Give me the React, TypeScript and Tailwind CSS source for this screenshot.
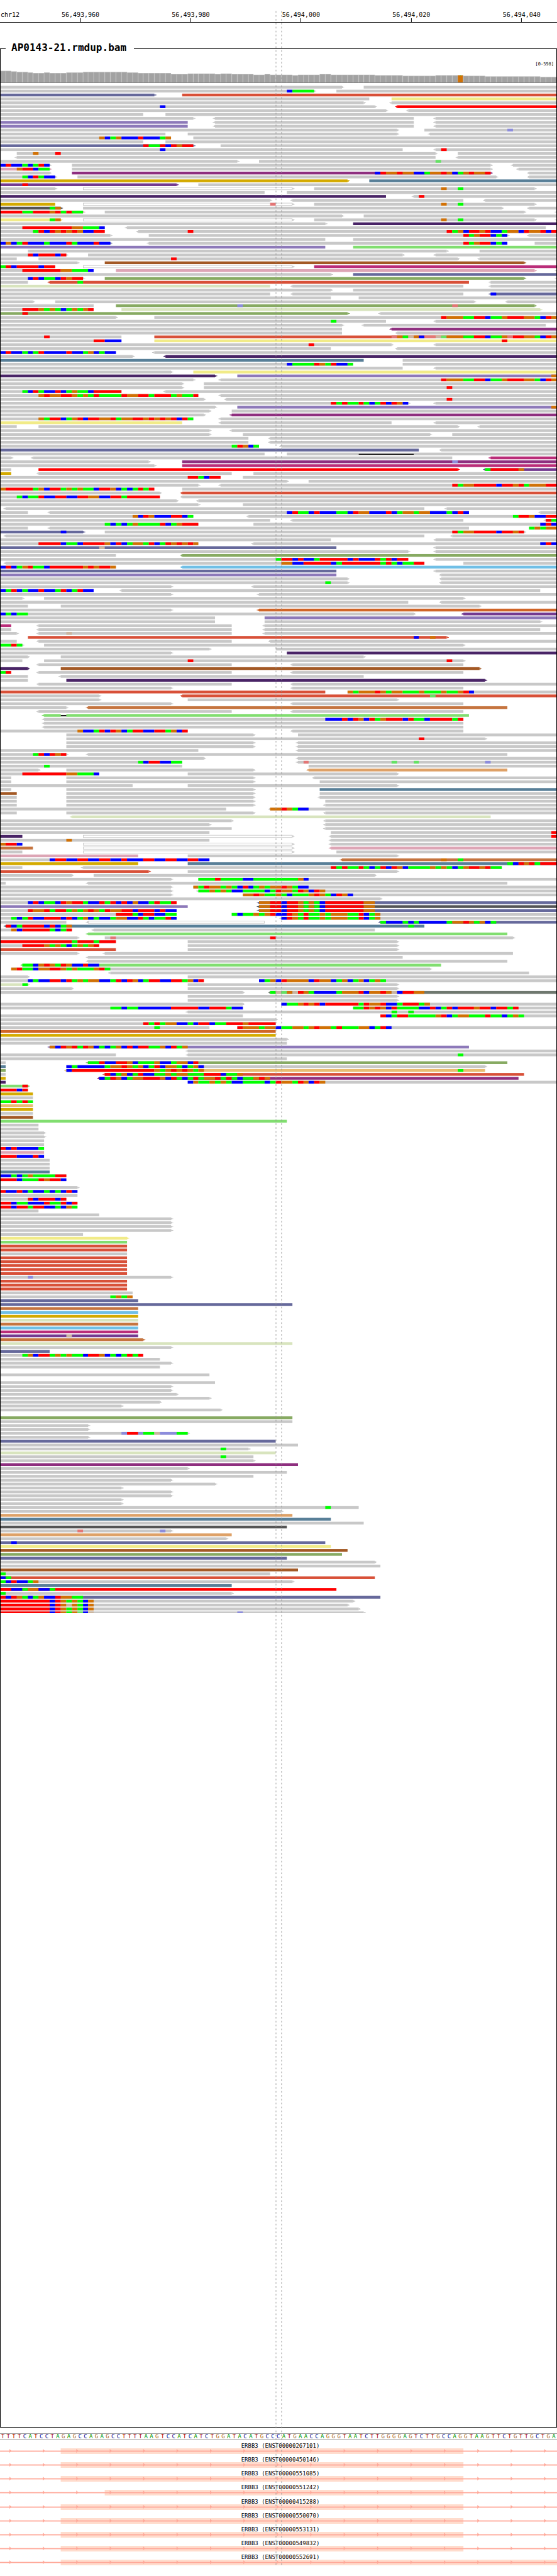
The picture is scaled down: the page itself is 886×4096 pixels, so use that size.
import React from "react";

/* ---------- Geometry shared by every track ---------- */

const BASE_WIDTH = 9.9;
const ROW_PITCH = 7;
const READ_HEIGHT = 5;
const FIRST_ROW_Y = 5;

const baseX = (index: number) => Math.round(index * BASE_WIDTH);

/* ---------- Colours ---------- */

const READ_COLORS: Record<string, string> = {
  grey: "#c8c8c8",
  sl: "#66699b",
  rd: "#d85038",
  ye: "#f1eb88",
  red: "#ff0000",
  pu: "#8d79b9",
  go: "#d4aa00",
  te: "#587f98",
  vi: "#733a90",
  dk: "#492466",
  ma: "#8e2f7f",
  pk: "#dda5b5",
  ch: "#555555",
  lg: "#81de70",
  br: "#a35925",
  mg: "#ba2d79",
  gr: "#87aa62",
  lm: "#d8e4be",
  sk: "#70bfe6",
  or: "#d06528",
  cu: "#c5743f",
  tn: "#dea167",
  sd: "#e8bc72",
  ol: "#6f786f",
};

const MISMATCH_COLORS: Record<string, string> = {
  A: "#00ff00",
  C: "#0000ff",
  G: "#d17105",
  T: "#ff0000",
  a: "#64e364",
  c: "#8c8cdc",
  g: "#cab5a0",
  t: "#e37676",
};

/* ---------- Alignment rows ----------
   One line per row. A read is written [<]start-end[>][=colour][@position bases],
   where < and > mark the strand arrow, lower-case bases have low quality,
   "-" is a deletion and the colour "h" draws an outlined read. */

const ALIGNMENTS = `
0-62> 66-101
0-57>@52CAAAA 61-101
0-28>=sl 33-101=rd
0-67 71-101=ye
0-66> <71-101
0-68>@29C <72-101=red
0-70> <74-101
0-26 30-101
0-35> <39-75 <79-101
0-34=pu <39-75 <79-101
0-34=pu <39-75 <79-101
0-72> 77-101@92c
0-30 34-72> <78-101
0-31@18GCAGCCCTCCCAG 35-101
0-26 30-101
0-35>=sl@26TAATCTGTT 40-101
0-73@29C <79-101@80T
3-79>@6G@10T 83-101
<3-79 <83-101
0-43> 47-101@79a
0-9>@0CTCCACATC 13-89> <93-101
0-9>=pk@3GTTCAA 13-89> <94-101
0-9> 13-89>=ma@68CTGGTGGCCAGGTGCAGTGGT <96-101
0-10>@4ACTACC 14-90> <96-101
0-63>=go 67-101=te
0-32>=vi@4T 36-101
0-10> 15-53>=h 57-97>@80G@83A
0-48 52-101
0-70=dk <75-101@76T
0-49> <53-84 <88-101
0-10=go 15-53>=h@49t 57-97>@80G@83A
0-11>=ch@9AG 15-91> <96-101
0-15>=pk@0TTTTAATTTGTATAA 19-95> <101-101
0-62> 66-101
0-11>=ye@9AG 15-53>=h 57-97>@80G@83A <101-101
0-59> 64-101=dk
0-19@4TTTTTTTTTGGAAAC <23-99
0-19@6ATCTGTGTGCCTT <25-101@34T@81TAGCTTGTCCAGGCTGGTCT
0-20> 27-92>@84TAGTTCAC <96-101
0-59 64-101
0-20>=sl@0CGCATCCCACCCTACCCTCC <27-92@84TAGTTCAC 97-101
0-59=pu 64-101=lg
5-81> 87-101
0-12>@5TCTTTCT 16-73> <79-101
0-3 7-83>@31T <87-101
0-14> 19-95>=br
0-10@0ATCTTTTCTT 15-53>=h 57-101=mg
0-17@4TTTTTTTGGAAAC 21-97>=pk <101-101
0-60> 64-101=sl
0-15>@5CTCAACTGTT 19-95>=gr <101-101
0-5 <9-85=rd@14A <89-101
0-49=lm <53-84 <89-101
0-60> 64-101
0-49 <53-84 <89-101=sl@89C
0-60 65-101
0-6> 10-86> <92-101
0-17 21-97>=gr@43c@82t
0-17@4TTTGAGACAGAGT 22-98>=lm
0-63>=gr@4T <69-101
0-21> 28-101@80TGGGAATTCAAGTTTGGACTG
0-70@60A <79-101
0-62> <66-99
0-62 <71-101=ma
0-62 <72-101
0-22@8T 28-101=rd@71tGAgGCttgaGGGAATTCAAGtTTGGACTG
0-22@17TTCCC 28-101=ye@91T
0-71>@56T <79-101
0-60 <72-101
0-21@0CTCCACATCCCCTCCAGCACC <28-101
0-24> <30-101=dk
0-66=te 73-101
0-64@52CAAAATGATCCA 73-101
0-73 <79-101
0-31> 35-101=ye
0-39>=dk 43-101=pu@100G
0-35> <40-101@80TGGGAATTCAAGTTTGGACTG
0-33> 37-101
0-33> 37-101@81T
0-22@4ACTACCTCAGAACTTTTT <30-101
0-36@7GTGGTTGAGATAAAATGGTTATTTAGAAT <40-101
0-37> <41-101@81T
0-74>@60TATAATACATCTGC <79-101
0-39> 43-101=pu@100G
0-38> 42-101
0-37> <42-101=ma
0-35@7GATTCAGTCTTGGTAGGTTGTGTGTCTA <40-101
0-33=ye <40-71 <79-101
0-3 7-83> <87-101
0-38> <42-101
0-38> 44-78> 82-101
0-45 <49-101
0-45 <49-101
0-47@42ATGCA <51-101
0-76=sl <80-101
0-48 52-101@65----------
0-2> <6-82 <89-101=mg
0-27> 33-101=ma@82c
0-28> 33-101=mg
0-2 7-83>=red <88-101=vi@88ATTTTTG
0-2=go <7-42 46-101
0-40@34TTACTT 44-101
0-52> 56-101
0-36> <40-101@82TAGGTTTTCTTGTAGGGTT
0-28@0GTTTTTAGCTTAGAGAACTTGCACATAT 33-101
0-29> <33-101=rd
0-29@3ACAATCCTTCCTTGGCCTTATTTTTT <33-101
0-32> <36-101
0-36> 44-101
<1-77 <81-101
0-5 <9-85@52CTAACTCCCAACTGGCCCTCAGGAGGCCCACTC <98-101
0-35@24GCTGCCCTTCA <45-101@93ATTGCCTT
0-49 <53-84 <99-101@99TA
0-36@19ACACAGAAAATCAGTTT 46-101@98CTC
0-5 <9-85 96-101@96AGAGG
0-15>=sl@11C 19-95>@82TAGGTTTTCTTGT
<1-77 <82-101
0-60 <79-101
0-36@7TTTTCAACTTTTGCTCAGGATCATGTGTG <46-101@98CTC
0-61=sl@18g <79-101
0-74> <79-101
0-21 <33-101=gr
0-74@50ATTCTCCATTTTTCTCCCTATCTT <79-101
<1-77@51GGCCTTTTTCATTTTTTTATACAATT 84-101
0-21@0CTCAGTAACTTTTTTGTGTTG <33-101=sk
0-61=sl <79-101
0-61=pu <80-101
0-63> <80-101
0-63>@59A <80-101
0-31> <46-101
0-17@0CATCACCTCCATCATCC <22-98
0-31> <47-101
0-4> 8-84>
0-74 <80-101
0-5 11-87>
0-31> <47-101=or
0-75>@0CACAA <84-101=vi
0-39 48-101=pu
0-39 48-98>
0-2=mg <7-42 <48-101
0-2 <7-42 <48-98
0-3> <7-42@12g <48-101
5-81>=rd@75C@78G
0-3 <7-42 <49-101
0-4>@0AATA 8-84>
0-38> 50-101
0-31> 52-101=dk
0-5> 11-66>
0-4 8-84>@34T@81T
<7-42 <53-84
0-5>=dk 11-87>=br
0-2@0AT <7-42 <53-84
0-5 <11-66
0-5 12-88>=dk
<7-42 <53-101
0-31> <53-84
0-59=rd 63-101@63GAGGGTGAGGAAAGAAAGAAGTC
0-18> <33-101=rd@78a
0-18> 34-72>
0-31> <53-84
0-12> <16-92=cu
<7-42 <53-84
<8-85=lg@11-
<8-84@59CCCTCTGCTAGTTTCTAACTTTTAT
<8-84
<8-84
0-34@14GCCATCTGCATTCCTTAGCT <53-84
12-46> 54-101
12-88>@76T
12-46> <54-101
12-46> <54-101
0-36 <54-101
0-12>@6ATCTGT <16-92
0-37> <54-101
0-33@25ACTTCCAA <54-101@55t@71a@75a@88c
0-33@8A 56-101
0-7> 12-46> <56-92=tn
0-18@4TTTTTTTTGGAAAC 34-72>
0-2 12-46> <57-101
0-2 12-46> 58-101
0-24 34-72>
0-2 12-46> 58-101=te
0-3=br 12-46> 58-101
0-3 12-46> <58-101
0-3 12-46> 59-101
0-3 12-46> <59-101
0-41 <49-101@49GGTGACC
0-3 12-46> <59-101
<13-89=lm
0-42> <59-101
0-38> <59-101
0-42 <59-101
0-38 60-101@100T
0-4=dk 15-53>=h <60-101@100T
0-38@12G <60-101
0-4@0GTTC 15-53>=h <60-101
0-6=cu 15-53>=h <60-101=pk
0-4 15-53>=h 61-101
0-25=pk 34-72>
0-38@9CTTCCTTCCTTCCTCCCTTCCTTCCTTCC <62-101=cu@80G@83A
0-25=go 34-101=te@92ACTGTATTT
0-4 <15-91@60TATAATACATCTGCAAAAGAGACAGTTGTAA
0-27>=rd 34-72>
0-13> 17-68>
0-31> 36-101@36AAATAAAACCAAAAAAAAGC
0-1 <16-92
0-31> 35-101@35GATGGAGACTCAGAGGTGACC
0-31> <36-101@36AAGAGACCAAAACATGGATGCTG
0-31> 44-101@44GGTGAAGACAAAGTGACTGC
0-69>
0-32@5CTCAACTGTTACCTATCTCGCCATAAT <47-101=sl@47GGTTCTTGAGACTTTTTTTGG
0-34=pu <47-101=ch@47GGTTCTTGAGACTTTTTTTGG
0-32@5TGGTATTAGAGTGATGGTTCTTTCTCC <47-101=sl@47GGTTCTTGAGACTTTTTTTGG
0-32@21TTTACTTCCAA 42-101@42ACAAGAGTCCTGATAAGAGGGAATCAG
0-32@2ACATCCTTTCTCAGCACCAGGCCTACAATC <51-101@51CTGATAAGAGGGAATCAG
0-12 <16-48=h <69-101=sl@69ACCCACACCCCCAGGTGAGCA
<1-77=te@1TCATTTTCTCAG@74A
0-13@2GCTTTTTACAT <17-68
<16-92=lg
0-14> 19-93>@20t@49T
0-21@0TTTTTTTTTTTTTATTTATTT 34-72>
0-18@4TTTTGAGACAGAGT 34-72>
0-21=rd 34-72>
0-14> <19-93
<16-73
<16-92
<4-80=lg@4AACGTGATGCCTCC
2-78>@2GTAACGGTTGAGAAAGTA
<20-96
0-5> 34-101
0-37@5CACCTTCTAGAGGCCATCTGCATTCCTTAGCT 47-101@47CAGCTGGGGCTGGCAGCAGCAGA
0-5>=lm@4A 34-72>
0-13> 34-72>
0-44> <49-101=ol@49AgaGgTGACCCCAGGGTCGGTGgCTTGG
34-72>
34-72>
0-44> 51-101@51CAAGTGTCTTTTTTATGGTCCATTTAG
0-44@20AACAACCCCCCTTTTTCCTTTACC 64-101@64AATGTGCTAAAACCTCATCTTTGTTCTTAT
<34-101@71A@74A
0-44 69-101@69TCATTAAAAAGTCAGGAAATAACAGA
0-50>
0-50@26TATAGGCCACTTCAATTTGTTTTT
0-38@28A 43-101@43TGGGAGGCAAGGAGTGGATAAAGGCATC
0-50=or
0-50=go
0-52>
0-52
<9-85=pu@9GCTGTATGCACAGCTCTTAAGCTAG
<34-101
0-21 <34-101@83A
0-52
0-1 <16-92=gr@16AATCCTTGCAAAGCCAGGCT
0-1=te 12-88>@12CACCCCCAGGTGAGCATCGGACAGC
0-1=gr <12-88=sd@12CTTTTTTTTTTTTTTTGAGTGTGAG@83A
0-1 <19-95=rd@19TCAGCATCCAAGAGGAAATTTCAAG
0-1=go <18-94=ma@18CATGCAGGTTTGCTACATAGGTATACAAGTG
0-1=dk 34-101@34CGAAGAGACCAAAACATGGATGCTG
0-5>=lg@4T
0-5@0TTTCT
0-6=go
0-6
0-6@0AATATA
0-6=sd
0-6=go
0-6
0-6=br
0-52=lg
0-7
0-7
0-8>
0-8>
0-8
0-8
0-8@0TCTCCCCA
0-8=pk
0-8@0TTTCCCTC
0-9
0-9
0-9
0-9=te
0-12@0CCACAGAAAATT
0-12@0TTTCAAATGTTC
.
0-14>
0-14@0TCCTCACCACACTC
0-14
0-12@5TCTTTCT
0-14@0TTCAACCCTAATCT
0-14@0TTCTTATTCCACGA
0-7
0-18
0-31>
0-31>
0-31>
0-31>
0-15
0-23>=ye
0-23=lg
0-23=rd
0-23=rd
0-23
0-23=rd
0-23=rd
0-23=rd
0-23=rd
0-23=rd
0-31>@5c
0-23=rd
0-23=rd
0-23=rd
0-24
0-24@20AGAG
0-25=sl
0-53=sl
0-25=cu
0-25=sk
0-25=go
0-25=lm
0-25=cu
0-25=sk
0-25=mg
0-25=vi@12g
0-26>=cu
0-53=lm
0-31>
0-9=sl
0-26@4AGCTTAGAGAACTTGCACATAT
0-29
0-31>
0-29
.
0-38
.
0-39
0-31>
0-31>
0-32>
0-38>
0-29>
0-22>
0-40>
.
0-53=gr
0-53
0-16>
0-16>
0-34>@22cTTcAAgcccAA
0-16>
0-50=sl
0-54
0-45>@40A
0-50=lm
0-46@40A
0-46>
0-54=ma
0-34>
0-52
0-46
0-31>
0-39>
0-22>
0-31>
0-31>
0-22>
0-22>
0-65@59A
0-51>
0-53=tn
0-60=te
0-66
0-52=ch
0-31>@14t@29c
0-42=tn
0-41>
0-59=sl@2C
0-60=ye
0-63=br
0-62=gr
0-52=sl
0-68>
0-69
0-54=br
0-49@0A
0-68=rd@0CA
0-53>@0ACTCCAG
0-42=te
0-61=red@0TTCCAGGCCA
0-42>@0A
0-69=sl@0TCTGACAGCCTGGAA
0-64>@0TTTTTTTTTCTGAGACG
0-63>@0TTTTTTTTTCTGgGACG
0-65>@0TTTTTTTTTCTGAGACG
0-66>@0TTTTTTTTTCTGAGaCg@43c
`
  .trim()
  .split("\n");

type Run = { start: number; length: number; base: string };

type Read = {
  start: number;
  end: number;
  left: boolean;
  right: boolean;
  color: string;
  runs: Run[];
};

const parseRuns = (text: string): Run[] => {
  const match = /^(\d+)(.+)$/.exec(text);
  if (!match) return [];
  const runs: Run[] = [];
  const first = Number(match[1]);
  match[2].split("").forEach((base, i) => {
    const last = runs[runs.length - 1];
    if (last && last.base === base) last.length += 1;
    else runs.push({ start: first + i, length: 1, base });
  });
  return runs;
};

const parseRead = (text: string): Read | null => {
  const [head, ...marks] = text.split("@");
  const match = /^(<?)(\d+)-(\d+)(>?)(?:=(\w+))?$/.exec(head);
  if (!match) return null;
  return {
    left: match[1] === "<",
    start: Number(match[2]),
    end: Number(match[3]),
    right: match[4] === ">",
    color: match[5] ?? "grey",
    runs: marks.flatMap(parseRuns),
  };
};

const ROWS: Read[][] = ALIGNMENTS.map((line) =>
  line
    .split(" ")
    .map(parseRead)
    .filter((read): read is Read => read !== null),
);

function ReadShape({ read, y }: { read: Read; y: number }) {
  const x1 = baseX(read.start);
  const x2 = baseX(read.end);
  const hollow = read.color === "h";
  const fill = hollow ? READ_COLORS.grey : READ_COLORS[read.color];
  return (
    <g>
      {hollow ? (
        <rect
          x={x1 + 0.5}
          y={y + 0.5}
          width={x2 - x1 - 1}
          height={READ_HEIGHT - 1}
          fill="#ffffff"
          stroke={fill}
        />
      ) : (
        <rect x={x1} y={y} width={x2 - x1} height={READ_HEIGHT} fill={fill} />
      )}
      {read.left && (
        <path d={`M${x1} ${y + 1}h-2v1h-2v1h2v1h2z`} fill={fill} />
      )}
      {read.right && (
        <path d={`M${x2} ${y + 1}h2v1h2v1h-2v1h-2z`} fill={fill} />
      )}
      {read.runs.map((run) => {
        const left = baseX(run.start);
        const width = baseX(run.start + run.length) - left;
        return run.base === "-" ? (
          <g key={run.start}>
            <rect x={left} y={y} width={width} height={READ_HEIGHT} fill="#ffffff" />
            <rect x={left} y={y + 2} width={width} height={2} fill="#000000" />
          </g>
        ) : (
          <rect
            key={run.start}
            x={left}
            y={y}
            width={width}
            height={READ_HEIGHT}
            fill={MISMATCH_COLORS[run.base]}
          />
        );
      })}
    </g>
  );
}

function AlignmentTrack() {
  return (
    <svg
      role="img"
      aria-label="Aligned reads"
      viewBox="1 0 998 2745"
      preserveAspectRatio="none"
      className="block h-[2433px] w-full"
    >
      {ROWS.map((reads, row) => (
        <g key={row}>
          {reads.map((read) => (
            <ReadShape key={read.start} read={read} y={FIRST_ROW_Y + row * ROW_PITCH} />
          ))}
        </g>
      ))}
    </svg>
  );
}

/* ---------- Coverage ---------- */

/* [number of bases, bar height] */
const COVERAGE_RUNS: [number, number][] = [
  [2, 21], [1, 20], [2, 19], [1, 18], [2, 17], [1, 18], [3, 17], [3, 18],
  [8, 19], [2, 18], [6, 17], [3, 15], [5, 16], [1, 15], [2, 16], [4, 15],
  [2, 14], [1, 15], [4, 14], [1, 13], [4, 14], [2, 15], [8, 14], [5, 13],
  [6, 12], [5, 13], [4, 12], [10, 11], [3, 10],
];

const COVERAGE = COVERAGE_RUNS.flatMap(([count, height]) =>
  Array.from({ length: count }, () => height),
);

const VARIANT_BASE = 83;

function CoverageTrack() {
  return (
    <svg
      role="img"
      aria-label="Coverage"
      viewBox="1 0 998 25"
      preserveAspectRatio="none"
      className="block h-[22px] w-full"
    >
      {COVERAGE.map((height, i) => {
        const x = baseX(i);
        const width = baseX(i + 1) - x;
        return (
          <g key={i}>
            <rect x={x} y={24 - height} width={width} height={height} fill="#b0b0b0" />
            <rect x={x + 1} y={25 - height} width={width - 2} height={height - 1} fill="#a2a2a2" />
          </g>
        );
      })}
      <rect x={baseX(VARIANT_BASE)} y={11} width={9} height={13} fill="#d17105" />
      <rect x={baseX(VARIANT_BASE) + 4} y={11} width={1} height={1} fill="#00ff00" />
      <rect x={0} y={24} width={1000} height={1} fill="#777777" />
    </svg>
  );
}

/* ---------- Ruler ---------- */

const TICKS = [
  { label: "56,493,960", place: "left-[14.45%]" },
  { label: "56,493,980", place: "left-[34.25%]" },
  { label: "56,494,000", place: "left-[54.05%]" },
  { label: "56,494,020", place: "left-[73.85%]" },
  { label: "56,494,040", place: "left-[93.65%]" },
];

function Ruler() {
  return (
    <header className="relative h-9 border-b border-black pt-[18px] text-[10px] leading-[12px]">
      <span className="pl-px">chr12</span>
      {TICKS.map((tick) => (
        <div
          key={tick.label}
          className={`absolute bottom-0 flex -translate-x-1/2 flex-col items-center ${tick.place}`}
        >
          <span className="-mb-px">{tick.label}</span>
          <span className="h-1.5 w-px bg-black" />
        </div>
      ))}
    </header>
  );
}

/* ---------- Reference sequence ---------- */

const SEQUENCE =
  "TTTTCATCCTAGAGCCAGAGCCTTTTAAGTCCATCATCTGGATACATGCC" +
  "CATGAACCAGGGTAATCTTGGGGAGTCTTGCCAGGTAAGTTCTGTTGCTGA";

const BASE_CLASSES: Record<string, string> = {
  A: "text-[#009900]",
  C: "text-[#00008b]",
  G: "text-[#a8641a]",
  T: "text-[#a80000]",
};

function SequenceTrack() {
  return (
    <div className="mt-[9px] flex h-[10px] border-y border-[#a0a0a0] text-[9px] leading-[9px]">
      {SEQUENCE.split("").map((base, i) => (
        <span key={i} className={`min-w-0 flex-1 text-center ${BASE_CLASSES[base]}`}>
          {base}
        </span>
      ))}
    </div>
  );
}

/* ---------- Transcripts ---------- */

const TRANSCRIPTS = [
  { id: "ENST00000267101", start: 11, end: 84 },
  { id: "ENST00000450146", start: 11, end: 84 },
  { id: "ENST00000551085", start: 11, end: 84 },
  { id: "ENST00000551242", start: 19, end: 84 },
  { id: "ENST00000415288", start: 11, end: 84 },
  { id: "ENST00000550070", start: 11, end: 84 },
  { id: "ENST00000553131", start: 11, end: 84 },
  { id: "ENST00000549832", start: 11, end: 84 },
  { id: "ENST00000552691", start: 11, end: 101 },
];

const ARROWS = Array.from({ length: 17 }, (_, i) => 17 + i * 60);

function TranscriptTrack() {
  return (
    <ul className="mt-px grid h-[199px] grid-rows-9">
      {TRANSCRIPTS.map((transcript) => (
        <li key={transcript.id} className="flex flex-col justify-end">
          <span className="pl-1.5 text-center text-[9px] leading-[8px]">
            ERBB3 ({transcript.id})
          </span>
          <svg
            aria-hidden="true"
            viewBox="0 0 1000 10"
            preserveAspectRatio="none"
            className="block h-[9px] w-full"
          >
            <rect
              x={baseX(transcript.start)}
              y={0}
              width={baseX(transcript.end) - baseX(transcript.start)}
              height={10}
              fill="#ffdccd"
            />
            <rect x={0} y={4} width={1000} height={2} fill="#ffa899" />
            {ARROWS.map((x) => (
              <path key={x} d={`M${x} 1l3.5 3.5l-3.5 3.5z`} fill="#ffa899" />
            ))}
          </svg>
        </li>
      ))}
    </ul>
  );
}

/* ---------- Page ---------- */

function CentreGuides() {
  return (
    <svg
      aria-hidden="true"
      viewBox="0 0 1000 4621"
      preserveAspectRatio="none"
      className="pointer-events-none absolute inset-0 h-full w-full"
    >
      <path
        d="M495.5 20V4601M505.5 20V4601"
        stroke="#969696"
        strokeWidth={1}
        strokeDasharray="3 4"
        fill="none"
      />
    </svg>
  );
}

export default function App() {
  return (
    <main className="relative flex min-h-screen flex-col overflow-hidden bg-white pb-[17px] font-['DejaVu_Sans_Mono',monospace] text-black">
      <Ruler />
      <fieldset className="mt-[31px] min-w-0 flex-1 border border-black">
        <legend className="ml-2 pr-3 pb-[3px] pl-[9px] text-base leading-[18px] font-bold">
          AP0143-21.rmdup.bam
        </legend>
        <p className="h-[22px] pt-[9px] pr-1 text-right text-[7px] leading-[10px]">[0-598]</p>
        <CoverageTrack />
        <AlignmentTrack />
      </fieldset>
      <SequenceTrack />
      <TranscriptTrack />
      <CentreGuides />
    </main>
  );
}
